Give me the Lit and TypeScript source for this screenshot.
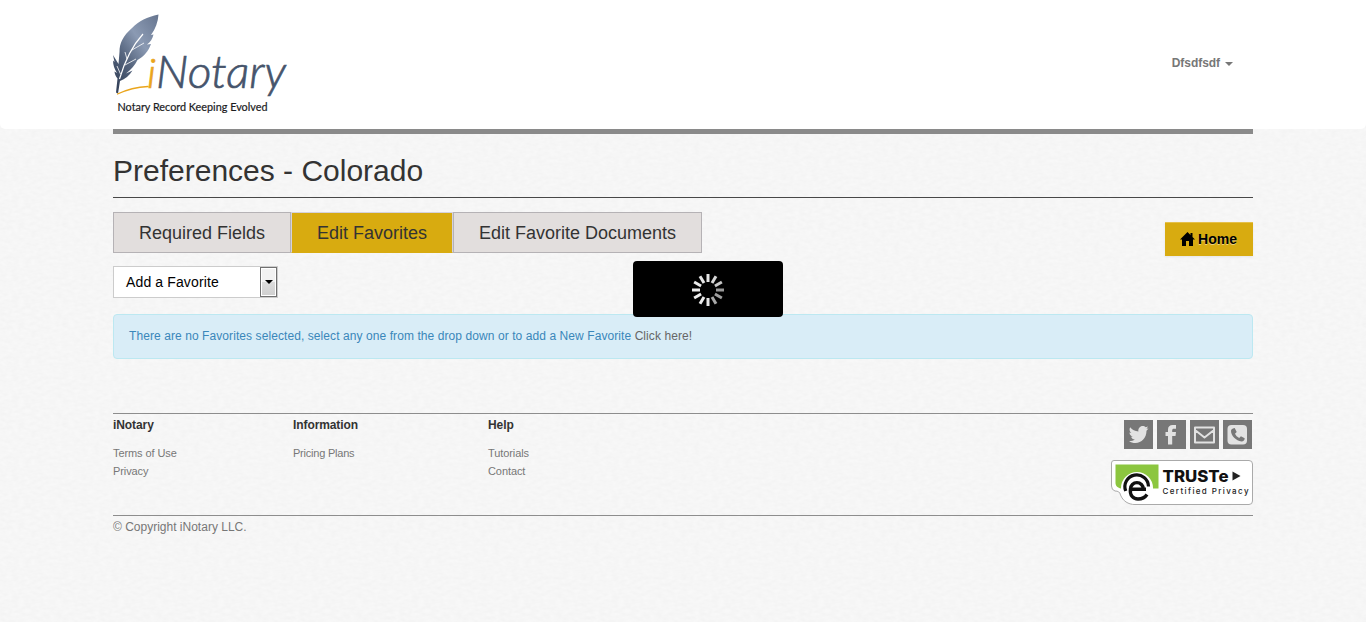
import { LitElement, html, css, svg } from "lit";
import { customElement } from "lit/decorators.js";

const paper = css`url("data:image/svg+xml,%3Csvg xmlns='http://www.w3.org/2000/svg' width='100' height='100'%3E%3Cfilter id='n' x='0' y='0' width='100%25' height='100%25' color-interpolation-filters='sRGB'%3E%3CfeTurbulence type='fractalNoise' baseFrequency='.16 .3' numOctaves='2' seed='4' stitchTiles='stitch'/%3E%3CfeColorMatrix values='.03 0 0 0 .949 .03 0 0 0 .949 .03 0 0 0 .949 0 0 0 0 1'/%3E%3C/filter%3E%3Crect width='100' height='100' filter='url(%23n)'/%3E%3C/svg%3E")`;

const spokes = [0.6, 0.62, 0.66, 0.9, 0.92, 0.93, 0.93, 0.92, 0.9, 0.9, 0.84, 0.78];

@customElement("brand-logo")
class BrandLogo extends LitElement {
  static styles = css`
    :host { display: block; width: 180px; height: 104px; }
    svg { display: block; overflow: visible; }
    .word { font-family: Lato, sans-serif; font-style: italic; font-weight: 300; font-size: 46px; fill: #46546b; stroke: #46546b; stroke-width: .7px; }
    .i { fill: #eaa51c; stroke: #eaa51c; font-size: 42px; }
    .tag { font-family: Lato, sans-serif; font-size: 10.500px; fill: #1d1d1f; stroke: #1d1d1f; stroke-width: .2px; }
  `;
  render() {
    return html`<svg width="180" height="104" viewBox="113 13 180 104">
      <defs><linearGradient id="q" x1="1" y1="0" x2="0.2" y2="1">
        <stop offset="0" stop-color="#66758f" /><stop offset=".4" stop-color="#8b9ab3" /><stop offset=".7" stop-color="#55647d" /><stop offset="1" stop-color="#35435b" />
      </linearGradient></defs>
      <path fill="url(#q)" d="M158.500 14.500C147 17 139 21 132 28 123 36 119.500 43 119.500 52L118.500 64 113 55 114.500 62 113 60.500C113 65 114.500 69 117 73L114.500 71.500C114.500 74 116 76.500 117.500 78.500L116 92.500 118 93.500 120 81C125 79 129.500 75.500 132.500 70.500L126 73.500C131 69.500 135 65.500 137.500 60C144 56.500 148.500 51 151 44L147 44.500C150.500 42 152.500 39 153.500 34.500L151 35C155.500 29 158 22 158.500 14.500Z" />
      <path fill="none" stroke="#fff" stroke-width="1.200" d="M143 34C133 45 125 60 119.500 79" />
      <path fill="none" stroke="#fff" stroke-width=".8" d="M127 59L125 52M120.500 74L117 66M132 50L144 43M125 65L136 59" />
      <path fill="none" stroke="#eaa51c" stroke-width="1.300" stroke-linecap="round" d="M117.500 94C127 89.500 138 87 148 86.500" />
      <text class="word i" x="147" y="88" textLength="9" lengthAdjust="spacingAndGlyphs">i</text>
      <text class="word" x="156" y="88" textLength="130" lengthAdjust="spacingAndGlyphs">Notary</text>
      <text class="tag" x="117.500" y="111" textLength="150" lengthAdjust="spacingAndGlyphs">Notary Record Keeping Evolved</text>
    </svg>`;
  }
}

@customElement("trust-seal")
class TrustSeal extends LitElement {
  static styles = css`
    :host { display: block; width: 142px; height: 45px; }
    svg { display: block; }
    .name { font: 800 16.500px Inter, sans-serif; fill: #111; }
    .sub { font: 500 8px Inter, sans-serif; fill: #222; }
  `;
  render() {
    return html`<svg width="142" height="45" viewBox="0 0 142 45">
      <path fill="#fff" stroke="#aaa" d="M3 .5H138Q141.500.5 141.500 4V41Q141.500 44.500 138 44.500H24C17 44.500 12 41 9.500 35 9 32 7 31 4 31Q.5 30 .5 26V3Q.5.5 3 .5Z" />
      <path fill="#8cc63f" d="M4.500 4.500H47.500V28.500H42L26 14 10 28.500C7 28 4.500 26 4.500 23Z" />
      <circle cx="26" cy="28" r="16" fill="#fff" />
      <path fill="none" stroke="#111" stroke-width="3.200" d="M14.700 31A11.800 11.800 0 1 1 37.500 26.500" />
      <path fill="none" stroke="#111" stroke-width="3.400" d="M20 29.300H35M32.300 29A6.300 6.300 0 0 0 19.500 29C18.500 35 22 39 27 39 31 39 34 37.500 36 34.500" />
      <text class="name" x="51.500" y="22" textLength="66" lengthAdjust="spacingAndGlyphs">TRUSTe</text>
      <path fill="#222" d="M121.500 11.500L129.500 16L121.500 20.500Z" />
      <text class="sub" x="51.500" y="34" textLength="86" lengthAdjust="spacing">Certified Privacy</text>
    </svg>`;
  }
}

@customElement("app-root")
class AppRoot extends LitElement {
  static styles = css`
    * { box-sizing: border-box; }
    :host { display: block; min-height: 622px; position: relative; background: #f6f6f6 ${paper}; font: 12px/18px "Liberation Sans", Arial, sans-serif; color: #333; }
    .top { height: 129px; background: #fff; border-radius: 0 0 5px 5px; }
    .wrap { width: 1140px; margin: 0 auto; }
    .head { display: flex; justify-content: space-between; padding-top: 13px; }
    .user { display: flex; align-items: center; gap: 5px; height: 18px; margin: 41px 20px 0 0; font-weight: 700; color: #777; letter-spacing: -.05px; }
    .caret { border: 4px solid transparent; border-top-color: #777; border-bottom: 0; margin-top: 2px; }
    .bar { height: 5px; background: #8a8a8a; }
    h1 { margin: 0; height: 64px; padding-top: 20px; border-bottom: 1px solid #484848; font-size: 30px; font-weight: 400; line-height: 34px; }
    .row { display: flex; justify-content: space-between; height: 68px; padding-top: 14px; }
    .tabs { display: flex; height: 41px; font-size: 18px; line-height: 41px; text-align: center; }
    .tab { border: 1px solid #b5b2b5; background: #e2dedd; }
    .required { width: 178px; } .favorites { width: 162px; } .documents { width: 249px; }
    .tab.on { background: #d8ab10; border-color: #d5d2dc #d5d2dc #d8ab10; }
    .home { width: 88px; height: 34px; margin-top: 10px; padding: 0 1px 2px 0; display: flex; align-items: center; justify-content: center; gap: 3px; background: #d8ab10; border-top: 1px solid #e5c04a; color: #000; font-size: 14px; font-weight: 700; text-shadow: 0 1px 0 #eed47e; box-shadow: 0 1px 2px #0001; }
    .select { width: 165px; height: 32px; display: flex; justify-content: space-between; background: #fff; border: 1px solid #ccc; padding-left: 12px; color: #000; font-size: 14px; line-height: 30px; letter-spacing: .13px; }
    .drop { width: 17px; height: 30px; border: 1px solid #707070; box-shadow: inset 0 0 0 1px #fff; background: linear-gradient(#f2f2f2 50%, #ddd 50%, #cfcfcf); display: flex; align-items: center; justify-content: center; }
    .drop i { border: 4px solid transparent; border-top-color: #000; border-bottom: 0; }
    .alert { height: 45px; margin-top: 16px; padding: 12px 15px; border: 1px solid #bce8f1; border-radius: 4px; background: #d9edf7; color: #3a87ba; letter-spacing: .08px; }
    .alert a { color: #666; }
    .foot { margin-top: 54px; height: 103px; border: solid #8d8d8d; border-width: 1px 0; display: flex; font-size: 11px; color: #777; letter-spacing: -.09px; }
    .col { padding-top: 2px; }
    .col b { display: block; font-size: 12px; color: #333; margin-bottom: 10px; }
    .c1 { width: 180px; } .c2 { width: 195px; }
    .c2 div { letter-spacing: -.22px; }
    .side { margin-left: auto; display: flex; flex-direction: column; align-items: flex-end; gap: 11px; padding-top: 6px; letter-spacing: 0; }
    .social { display: flex; gap: 4px; margin-right: 1px; }
    .social svg { display: block; width: 29px; height: 29px; background: #777; fill: #e2e2e2; }
    .copy { padding-top: 2px; color: #777; }
    .loader { position: absolute; left: 633px; top: 261px; width: 150px; height: 56px; padding-top: 2px; border-radius: 4px; background: #000; display: flex; align-items: center; justify-content: center; }
  `;
  render() {
    return html`
      <div class="top"><div class="wrap head"><brand-logo></brand-logo><div class="user">Dfsdfsdf <i class="caret"></i></div></div></div>
      <div class="wrap">
        <div class="bar"></div>
        <h1>Preferences - Colorado</h1>
        <div class="row">
          <div class="tabs">
            <div class="tab required">Required Fields</div>
            <div class="tab favorites on">Edit Favorites</div>
            <div class="tab documents">Edit Favorite Documents</div>
          </div>
          <div class="home">
            <svg width="15" height="14" viewBox="0 0 15 14"><path d="M7.500 0L10.500 3V1H12.500V5L15 7.500H13V14H9V9H6V14H2V7.500H0Z" /></svg>Home
          </div>
        </div>
        <div class="select">Add a Favorite<span class="drop"><i></i></span></div>
        <div class="alert">There are no Favorites selected, select any one from the drop down or to add a New Favorite <a>Click here!</a></div>
        <div class="foot">
          <div class="col c1"><b>iNotary</b><div>Terms of Use</div><div>Privacy</div></div>
          <div class="col c2"><b>Information</b><div>Pricing Plans</div></div>
          <div class="col"><b>Help</b><div>Tutorials</div><div>Contact</div></div>
          <div class="side">
            <div class="social">
              <svg viewBox="0 0 29 29"><path d="M24.500 8.500l-2 2.300C22.500 18 17.500 23 11.500 23c-2.500 0-4.800-.6-6.500-1.800 2.200.1 4.200-.5 5.800-1.700-1.900-.2-3.200-1.300-3.700-2.800h1.700C6.800 16 5.500 14.500 5.500 12.500l1.800.4C5.500 11.500 5 9.300 6.200 7.300c2 2.500 4.800 4 8.200 4.200C13.800 8.500 16 6 18.700 6c1.200 0 2.200.5 3 1.300L24 6.500l-1.500 2.300z" /></svg>
              <svg viewBox="0 0 29 29"><path d="M19 5v3.700h-2.300c-1 0-1.500.5-1.500 1.600V12H19l-.5 4h-3.300v8.500H11V16H8.500v-4H11v-2.500C11 6.500 12.700 5 15.700 5z" /></svg>
              <svg viewBox="0 0 29 29"><path fill="none" stroke="#e2e2e2" stroke-width="2" stroke-linejoin="round" d="M5 7.500H24V22.500H5ZM5 10l9.500 7.500L24 10" /></svg>
              <svg viewBox="0 0 29 29"><rect x="4.500" y="5" width="19.500" height="19.500" rx="4" /><path fill="#777" d="M10 8.500l1.700-.5 2 4-1.700 1.800c1 2 2 3 4.200 4.200l1.700-1.800 3.800 2c0 2-1.200 3-3.200 3.200C13 21 8 15.500 8 11c0-1.200.7-2 2-2.500z" /></svg>
            </div>
            <trust-seal></trust-seal>
          </div>
        </div>
        <div class="copy">© Copyright iNotary LLC.</div>
      </div>
      <div class="loader">
        <svg width="34" height="34" viewBox="-17 -17 34 34">
          ${spokes.map((o, i) => svg`<rect x="8" y="-1.500" width="8" height="3" fill="#fff" opacity=${o} transform="rotate(${i * 30})" />`)}
        </svg>
      </div>
    `;
  }
}
